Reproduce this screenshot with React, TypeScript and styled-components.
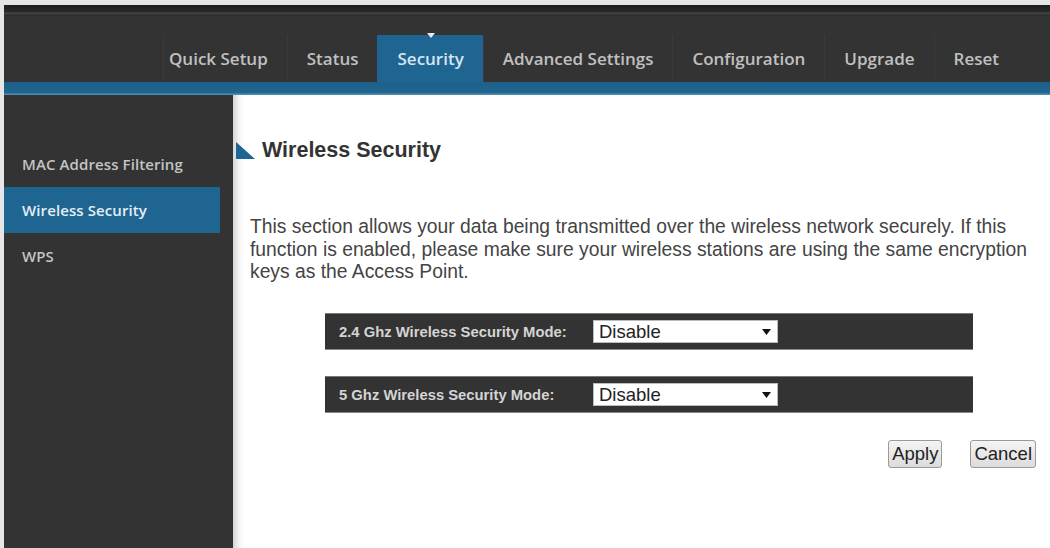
import React from "react";
import styled, { createGlobalStyle } from "styled-components";

const GlobalStyle = createGlobalStyle`
  html, body { margin: 0; padding: 0; background: #ffffff; }
  body { font-family: "Liberation Sans", Arial, sans-serif; }
  * { box-sizing: border-box; }
`;

const Page = styled.div`
  display: flex;
  flex-direction: column;
  height: 548px;
  padding: 5px 0 0 4px;
  background: #e6e6e6;
  overflow: hidden;
`;

const Header = styled.header`
  height: 77px;
  display: flex;
  justify-content: flex-end;
  align-items: flex-end;
  padding-right: 32px;
  background: linear-gradient(
    to bottom,
    #1e1e1e 0px,
    #2a2a2a 7px,
    #4a4a4a 8px,
    #2e2e2e 10px,
    #333333 12px,
    #333333 100%
  );
`;

const Nav = styled.nav`
  display: flex;
  height: 47px;
`;

const Tab = styled.div<{ $active?: boolean }>`
  position: relative;
  display: flex;
  align-items: center;
  justify-content: center;
  padding: 0 19px;
  font-family: "Open Sans", "Liberation Sans", sans-serif;
  font-weight: 600;
  font-size: 17px;
  color: ${(p) => (p.$active ? "#d4e6f2" : "#c0c0c0")};
  background: ${(p) => (p.$active ? "#1f6591" : "transparent")};
  border-left: 1px solid ${(p) => (p.$active ? "#1f6591" : "#3a3a3a")};
  white-space: nowrap;

  &:first-child {
    padding-left: 5px;
  }
`;

const TabPointer = styled.span`
  position: absolute;
  top: -2px;
  left: 50%;
  margin-left: -4px;
  width: 0;
  height: 0;
  border-left: 4px solid transparent;
  border-right: 4px solid transparent;
  border-top: 5px solid #e8eef2;
`;

const Stripe = styled.div`
  height: 13px;
  background: linear-gradient(to bottom, #1d5f8a 0%, #20668f 80%, #5d93b4 100%);
`;

const Body = styled.div`
  flex: 1;
  display: flex;
  min-height: 0;
`;

const Sidebar = styled.aside`
  width: 229px;
  flex-shrink: 0;
  background: #333333;
  padding-top: 46px;
  display: flex;
  flex-direction: column;
`;

const SideItem = styled.div<{ $active?: boolean }>`
  height: 46px;
  width: 216px;
  display: flex;
  align-items: center;
  padding-left: 18px;
  font-family: "Open Sans", "Liberation Sans", sans-serif;
  font-weight: 600;
  font-size: 15px;
  letter-spacing: 0.1px;
  color: ${(p) => (p.$active ? "#e4eef5" : "#c4c4c4")};
  background: ${(p) => (p.$active ? "#1f6591" : "transparent")};
`;

const Main = styled.main`
  flex: 1;
  background: #ffffff;
  box-shadow: inset 10px 0 10px -8px rgba(0, 0, 0, 0.25);
  padding: 45px 14px 0 3px;
`;

const Heading = styled.h2`
  margin: 0;
  display: flex;
  align-items: center;
  gap: 7px;
  height: 20px;
  font-size: 21.5px;
  font-weight: bold;
  color: #333333;
`;

const HeadingMark = styled.svg`
  width: 19px;
  height: 17px;
  flex-shrink: 0;
`;

const Intro = styled.p`
  margin: 56px 0 0 14px;
  font-size: 19.3px;
  line-height: 22.7px;
  color: #444444;
  max-width: 790px;
`;

const Rows = styled.div`
  margin: 29px 0 0 89px;
  width: 648px;
  display: flex;
  flex-direction: column;
  gap: 26px;
`;

const Row = styled.div`
  height: 37px;
  display: flex;
  align-items: center;
  padding-left: 14px;
  background: #333333;
  border-top: 1px solid #777;
  border-bottom: 1px solid #888;
`;

const RowLabel = styled.span`
  width: 254px;
  font-size: 14.8px;
  font-weight: bold;
  color: #d4d4d4;
`;

const SelectBox = styled.div`
  width: 185px;
  height: 23px;
  display: flex;
  align-items: center;
  justify-content: space-between;
  padding: 0 6px 0 5px;
  background: #ffffff;
  border: 1px solid #bbbbbb;
  font-size: 18.5px;
  color: #222222;
`;

const Arrow = styled.svg`
  width: 9px;
  height: 6px;
`;

const Actions = styled.div`
  margin-top: 27px;
  display: flex;
  justify-content: flex-end;
  gap: 28px;
`;

const Button = styled.button`
  height: 28px;
  padding: 0 3px;
  font-family: "Liberation Sans", Arial, sans-serif;
  font-size: 18.5px;
  color: #222222;
  background: linear-gradient(to bottom, #f4f4f4, #dcdcdc);
  border: 1px solid #9a9a9a;
  border-radius: 3px;
`;

const tabs = [
  "Quick Setup",
  "Status",
  "Security",
  "Advanced Settings",
  "Configuration",
  "Upgrade",
  "Reset",
];

const sideItems = ["MAC Address Filtering", "Wireless Security", "WPS"];

const modes = ["2.4 Ghz Wireless Security Mode:", "5 Ghz Wireless Security Mode:"];

export default function App() {
  return (
    <>
      <GlobalStyle />
      <Page>
        <Header>
          <Nav>
            {tabs.map((t) => (
              <Tab key={t} $active={t === "Security"}>
                {t === "Security" && <TabPointer />}
                {t}
              </Tab>
            ))}
          </Nav>
        </Header>
        <Stripe />
        <Body>
          <Sidebar>
            {sideItems.map((s) => (
              <SideItem key={s} $active={s === "Wireless Security"}>
                {s}
              </SideItem>
            ))}
          </Sidebar>
          <Main>
            <Heading>
              <HeadingMark viewBox="0 0 19 17">
                <polygon points="0,0 19,17 0,17" fill="#1f6591" />
              </HeadingMark>
              Wireless Security
            </Heading>
            <Intro>
              This section allows your data being transmitted over the wireless network
              securely. If this function is enabled, please make sure your wireless stations
              are using the same encryption keys as the Access Point.
            </Intro>
            <Rows>
              {modes.map((m) => (
                <Row key={m}>
                  <RowLabel>{m}</RowLabel>
                  <SelectBox>
                    Disable
                    <Arrow viewBox="0 0 9 6">
                      <polygon points="0,0 9,0 4.5,6" fill="#111" />
                    </Arrow>
                  </SelectBox>
                </Row>
              ))}
            </Rows>
            <Actions>
              <Button>Apply</Button>
              <Button>Cancel</Button>
            </Actions>
          </Main>
        </Body>
      </Page>
    </>
  );
}
